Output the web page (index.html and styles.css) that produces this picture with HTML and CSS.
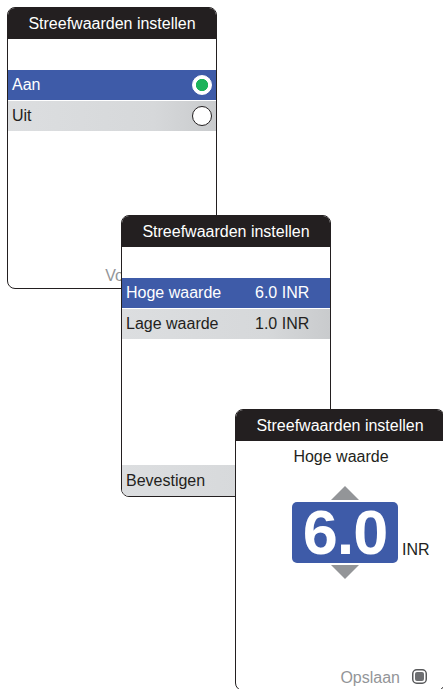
FILE: index.html
```html
<!DOCTYPE html>
<html lang="nl">
<head>
    <meta charset="UTF-8">
    <meta name="viewport" content="width=device-width, initial-scale=1.0">
    <title>Streefwaarden instellen</title>
    <link rel="stylesheet" href="styles.css">
</head>
<body>
    <div class="stage">
        <!-- Scherm 1: aan / uit -->
        <div class="screen screen-one">
            <div class="screen-header">Streefwaarden instellen</div>
            <div class="screen-body">
                <div class="spacer"></div>
                <div class="row selected">
                    <span>Aan</span>
                    <span class="radio on"></span>
                </div>
                <div class="row">
                    <span>Uit</span>
                    <span class="radio"></span>
                </div>
                <div class="footer">
                    <span>Volgende</span>
                    <svg class="stop-icon" width="15" height="15" viewBox="0 0 15 15">
                        <rect x="0.75" y="0.75" width="13.5" height="13.5" rx="4" fill="#fff" stroke="#58595b" stroke-width="1.5"/>
                        <rect x="3" y="3" width="9" height="9" rx="2" fill="#6d6e71"/>
                    </svg>
                </div>
            </div>
        </div>

        <!-- Scherm 2: waarden -->
        <div class="screen screen-two">
            <div class="screen-header">Streefwaarden instellen</div>
            <div class="screen-body">
                <div class="spacer"></div>
                <div class="row selected">
                    <span class="label">Hoge waarde</span>
                    <span>6.0 INR</span>
                </div>
                <div class="row">
                    <span class="label">Lage waarde</span>
                    <span>1.0 INR</span>
                </div>
                <div class="row confirm">
                    <span>Bevestigen</span>
                </div>
            </div>
        </div>

        <!-- Scherm 3: hoge waarde wijzigen -->
        <div class="screen screen-three">
            <div class="screen-header">Streefwaarden instellen</div>
            <div class="screen-body">
                <div class="title">Hoge waarde</div>
                <div class="spinner">
                    <div class="arrow up"></div>
                    <div class="value-row">
                        <div class="value-box">6.0</div>
                        <span class="unit">INR</span>
                    </div>
                    <div class="arrow down"></div>
                </div>
                <div class="footer">
                    <span>Opslaan</span>
                    <svg class="stop-icon" width="15" height="15" viewBox="0 0 15 15">
                        <rect x="0.75" y="0.75" width="13.5" height="13.5" rx="4" fill="#fff" stroke="#58595b" stroke-width="1.5"/>
                        <rect x="3" y="3" width="9" height="9" rx="2" fill="#6d6e71"/>
                    </svg>
                </div>
            </div>
        </div>
    </div>
</body>
</html>
```

FILE: styles.css
```css
body {
    margin: 0;
    padding: 0;
    background-color: #fff;
    font-family: "Liberation Sans", Arial, sans-serif;
    font-size: 16px;
    color: #231f20;
}
.stage {
    position: relative;
    width: 443px;
    height: 689px;
    overflow: hidden;
}
.screen {
    position: absolute;
    width: 210px;
    height: 282px;
    box-sizing: border-box;
    border: 1px solid #231f20;
    border-radius: 8px;
    background: #fff;
    display: flex;
    flex-direction: column;
    overflow: hidden;
}
.screen-one {
    left: 7px;
    top: 7px;
    z-index: 1;
}
.screen-two {
    left: 121px;
    top: 215px;
    z-index: 2;
}
.screen-three {
    left: 235px;
    top: 409px;
    z-index: 3;
}
.screen-header {
    height: 31px;
    line-height: 31px;
    background: #231f20;
    color: #fff;
    text-align: center;
    flex-shrink: 0;
}
.screen-body {
    flex: 1;
    display: flex;
    flex-direction: column;
}
.spacer {
    height: 31px;
}
.row {
    height: 30px;
    padding: 0 4px;
    display: flex;
    align-items: center;
    justify-content: space-between;
    background: linear-gradient(to right, #dcdee0 0%, #d6d8da 70%, #c9cbcd 100%);
}
.row + .row {
    margin-top: 1px;
}
.row.selected {
    background: #3e5ba8;
    color: #fff;
}
.screen-two .row {
    justify-content: flex-start;
}
.label {
    width: 129px;
}
.row.confirm {
    margin-top: auto;
    height: 31px;
}
.radio {
    width: 18px;
    height: 18px;
    border-radius: 50%;
    border: 1px solid #231f20;
    background: #fff;
    box-sizing: content-box;
}
.radio.on {
    border-color: #fff;
    background: radial-gradient(circle, #1db35b 0, #1db35b 5.8px, #fff 6.4px);
}
.footer {
    margin-top: auto;
    display: flex;
    justify-content: flex-end;
    align-items: flex-end;
    gap: 12px;
    padding: 0 17px 3px 0;
    line-height: 18px;
    color: #939598;
}
.stop-icon {
    display: block;
    margin-bottom: 3px;
}
.title {
    text-align: center;
    line-height: 18px;
    padding-top: 7px;
    padding-left: 2px;
}
.spinner {
    display: flex;
    flex-direction: column;
    align-items: flex-start;
    padding-left: 56px;
    margin-top: 20px;
}
.arrow {
    width: 0;
    height: 0;
    margin-left: 39px;
    border-left: 14px solid transparent;
    border-right: 14px solid transparent;
}
.arrow.up {
    border-bottom: 14px solid #939598;
    margin-bottom: 2px;
}
.arrow.down {
    border-top: 14px solid #939598;
    margin-top: 2px;
}
.value-row {
    display: flex;
    align-items: flex-end;
}
.value-box {
    width: 106px;
    height: 61px;
    border-radius: 5px;
    background: #3e5ba8;
    color: #fff;
    font-weight: bold;
    font-size: 63px;
    line-height: 61px;
    text-align: center;
    letter-spacing: -1px;
}
.unit {
    margin-left: 4px;
    margin-bottom: 4px;
    line-height: 18px;
}
```
